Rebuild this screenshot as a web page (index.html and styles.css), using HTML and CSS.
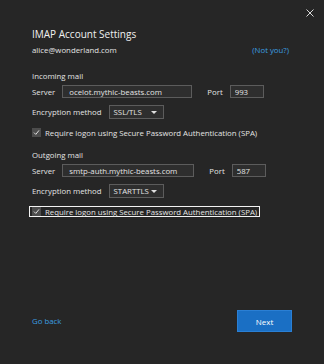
FILE: index.html
```html
<!DOCTYPE html>
<html lang="en">
<head>
    <meta charset="UTF-8">
    <title>IMAP Account Settings</title>
    <link rel="stylesheet" href="styles.css">
</head>
<body>
    <div class="dialog">
        <button class="close" aria-label="Close">
            <svg width="8" height="8" viewBox="0 0 8 8"><path d="M0.5 0.5 L7.5 7.5 M7.5 0.5 L0.5 7.5" stroke="#d8d8d8" stroke-width="1"/></svg>
        </button>

        <div class="content">
            <h1>IMAP Account Settings</h1>
            <div class="account">
                <span>alice@wonderland.com</span>
                <a href="#" class="link">(Not you?)</a>
            </div>

            <div class="group">
                <div class="group-title">Incoming mail</div>
                <div class="row">
                    <label>Server</label>
                    <input class="server" type="text" value="ocelot.mythic-beasts.com">
                    <label class="port-label">Port</label>
                    <input class="port" type="text" value="993">
                </div>
                <div class="row">
                    <label>Encryption method</label>
                    <div class="select">SSL/TLS <span class="arrow"></span></div>
                </div>
                <div class="check">
                    <span class="box"><svg width="9" height="9" viewBox="0 0 9 9"><path d="M2 4.6 L3.8 6.4 L7 2.4" fill="none" stroke="#dcdcdc" stroke-width="1"/></svg></span>
                    <span>Require logon using Secure Password Authentication (SPA)</span>
                </div>
            </div>

            <div class="group">
                <div class="group-title">Outgoing mail</div>
                <div class="row">
                    <label>Server</label>
                    <input class="server wide" type="text" value="smtp-auth.mythic-beasts.com">
                    <label class="port-label">Port</label>
                    <input class="port" type="text" value="587">
                </div>
                <div class="row">
                    <label>Encryption method</label>
                    <div class="select">STARTTLS <span class="arrow"></span></div>
                </div>
                <div class="check focused">
                    <span class="box"><svg width="9" height="9" viewBox="0 0 9 9"><path d="M2 4.6 L3.8 6.4 L7 2.4" fill="none" stroke="#dcdcdc" stroke-width="1"/></svg></span>
                    <span>Require logon using Secure Password Authentication (SPA)</span>
                </div>
            </div>
        </div>

        <div class="footer">
            <a href="#" class="link">Go back</a>
            <button class="primary">Next</button>
        </div>
    </div>
</body>
</html>
```

FILE: styles.css
```css
body {
    margin: 0;
    background: #262626;
    font-family: 'Open Sans', sans-serif;
    color: #e4e4e4;
}
.dialog {
    position: relative;
    width: 324px;
    height: 364px;
    background: #262626;
    display: flex;
    flex-direction: column;
}
.close {
    position: absolute;
    top: 5px;
    right: 10px;
    background: none;
    border: none;
    padding: 0;
    width: 8px;
    height: 10px;
}
.content {
    padding: 27px 35px 0 32px;
}
h1 {
    margin: 0;
    font-size: 10px;
    font-weight: normal;
    color: #f0f0f0;
}
.account {
    display: flex;
    justify-content: space-between;
    font-size: 7.8px;
    margin-top: 4px;
}
.link {
    color: #3b9ee0;
    text-decoration: none;
    font-size: 7.8px;
}
.group {
    margin-top: 16px;
    font-size: 7.8px;
}
.group + .group {
    margin-top: 12px;
}
.group-title {
    line-height: 10px;
}
.row {
    display: flex;
    align-items: center;
    margin-top: 4px;
}
.row + .row {
    margin-top: 7px;
}
label {
    margin-right: 7px;
}
input {
    font-family: inherit;
    font-size: 7.8px;
    color: #e4e4e4;
    background: #2e2e2e;
    border: 1px solid #5c5c5c;
    height: 13px;
    box-sizing: border-box;
    padding: 0 6px;
    margin: 0;
}
.server {
    width: 130px;
}
.server.wide {
    width: 132px;
}
.port-label {
    margin-left: 15px;
}
.port {
    width: 34px;
    padding: 0 4px;
}
.select {
    display: flex;
    align-items: center;
    justify-content: space-between;
    width: 55px;
    height: 14px;
    box-sizing: border-box;
    border: 1px solid #5c5c5c;
    background: #2e2e2e;
    padding: 0 4px 0 4px;
}
.arrow {
    width: 0;
    height: 0;
    border-left: 3px solid transparent;
    border-right: 3px solid transparent;
    border-top: 3px solid #e0e0e0;
    margin-right: 2px;
}
.check {
    display: flex;
    align-items: center;
    gap: 4px;
    height: 11px;
    box-sizing: border-box;
    margin-top: 8px;
    padding: 0 2px;
    margin-left: -3px;
    width: fit-content;
    border: 1px solid transparent;
}
.check.focused {
    border-color: #f2f2f2;
}
.box {
    width: 9px;
    height: 9px;
    background: #4c4c4c;
    display: flex;
}
.footer {
    margin-top: auto;
    display: flex;
    justify-content: space-between;
    align-items: center;
    padding: 0 32px 32px 32px;
}
.primary {
    width: 55px;
    height: 22px;
    background: #1a6fc4;
    color: #ffffff;
    border: 1px solid #2a7fd4;
    font-family: inherit;
    font-size: 8px;
}
```
